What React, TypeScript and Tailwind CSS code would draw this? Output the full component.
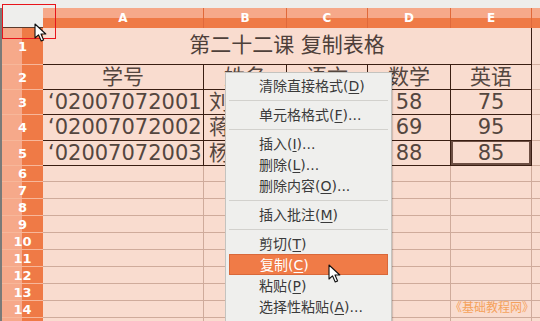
import React from "react";

const FONT = '"DejaVu Sans", "Noto Sans CJK SC", sans-serif';

const COLS = [
  { k: "A", w: "w-[161px]" },
  { k: "B", w: "w-[83px]" },
  { k: "C", w: "w-[81px]" },
  { k: "D", w: "w-[83px]" },
  { k: "E", w: "w-[81px]" },
];

function RowHead({ n, h }: { n?: number; h: string }) {
  return (
    <div
      className={`${h} w-[41px] shrink-0 flex items-center justify-center border-b border-[#f7b79a] bg-[linear-gradient(to_right,#f6a98a_20px,#ef7a46_20px)] text-white font-bold text-[13px] leading-none`}
    >
      {n}
    </div>
  );
}

const dataRows = [
  { h: "h-[25px]", cells: ["学号", "姓名", "语文", "数学", "英语"], center: true },
  { h: "h-[25px]", cells: ["‘02007072001", "刘芳", "80", "58", "75"] },
  { h: "h-[26px]", cells: ["‘02007072002", "蒋敏", "92", "69", "95"] },
  { h: "h-[25px]", cells: ["‘02007072003", "杨洋", "77", "88", "85"] },
];

function Arrow({ className }: { className: string }) {
  return (
    <svg className={className} width="13" height="20" viewBox="0 0 13 20">
      <path
        d="M1 1 L1 15 L4.5 11.8 L7.2 18 L9.6 17 L7 11 L11.8 11 Z"
        fill="#fff"
        stroke="#111"
        strokeWidth="1.1"
        strokeLinejoin="round"
      />
    </svg>
  );
}

type Item = { t: string; m: string; tail?: string; hi?: boolean };
const menu: (Item | "sep")[] = [
  { t: "清除直接格式(", m: "D", tail: ")" },
  "sep",
  { t: "单元格格式(", m: "F", tail: ")..." },
  "sep",
  { t: "插入(", m: "I", tail: ")..." },
  { t: "删除(", m: "L", tail: ")..." },
  { t: "删除内容(", m: "O", tail: ")..." },
  "sep",
  { t: "插入批注(", m: "M", tail: ")" },
  "sep",
  { t: "剪切(", m: "T", tail: ")" },
  { t: "复制(", m: "C", tail: ")", hi: true },
  { t: "粘贴(", m: "P", tail: ")" },
  { t: "选择性粘贴(", m: "A", tail: ")..." },
  "sep",
];

export default function App() {
  return (
    <div
      className="relative w-[540px] h-[321px] overflow-hidden bg-[#eeeeec]"
      style={{ fontFamily: FONT }}
    >
      <div className="h-[8px] bg-[#eeeeec]" />
      <div className="flex">
        <div className="w-[2px] shrink-0 bg-[#7a7a78]" />
        <div className="flex-1 flex flex-col bg-[#f9dccf]">
          {/* column header */}
          <div className="flex h-[20px]">
            <div className="w-[41px] shrink-0 bg-[#eeeeec] border-b border-[#5a3a2c]" />
            {COLS.map((c) => (
              <div
                key={c.k}
                className={`${c.w} shrink-0 flex items-center justify-center border-r border-[#e0693a] bg-[linear-gradient(to_bottom,#f6a98a_50%,#ef7a46_50%)] text-white font-bold text-[12px] leading-none`}
              >
                {c.k}
              </div>
            ))}
            <div className="flex-1 bg-[linear-gradient(to_bottom,#f6a98a_50%,#ef7a46_50%)]" />
          </div>

          {/* row 1 merged title */}
          <div className="flex h-[37px]">
            <RowHead n={1} h="h-[37px]" />
            <div className="w-[489px] shrink-0 flex items-center justify-center border-r border-b border-[#3a1e12] text-[21px] text-[#4e403a]">
              第二十二课 复制表格
            </div>
            <div className="flex-1 border-b border-[#d4b0a0]" />
          </div>

          {dataRows.map((r, ri) => (
            <div key={ri} className={`flex ${r.h}`}>
              <RowHead n={ri + 2} h={r.h} />
              {COLS.map((c, ci) => {
                const sel = ri === 3 && ci === 4;
                const left = ci < 2 && !r.center;
                return (
                  <div
                    key={c.k}
                    className={`${c.w} shrink-0 relative flex items-center ${
                      left ? "justify-start pl-[5px]" : "justify-center"
                    } border-r border-b border-[#3a1e12] text-[21px] leading-none text-[#54463f] whitespace-nowrap overflow-hidden`}
                  >
                    {r.cells[ci]}
                    {sel && (
                      <div className="absolute -left-px -top-[2px] -right-px -bottom-px border-[3px] border-[#6d4f43]" />
                    )}
                  </div>
                );
              })}
              <div className="flex-1 border-b border-[#d4b0a0]" />
            </div>
          ))}

          {[6, 7, 8, 9, 10, 11, 12, 13, 14, 15].map((n) => {
            const h = n === 6 ? "h-[16px]" : "h-[17px]";
            return (
              <div key={n} className={`flex ${h}`}>
                <RowHead n={n < 15 ? n : undefined} h={h} />
                {COLS.map((c) => (
                  <div
                    key={c.k}
                    className={`${c.w} shrink-0 border-r border-b border-[#cfab9b]`}
                  />
                ))}
                <div className="flex-1 border-b border-[#cfab9b]" />
              </div>
            );
          })}
        </div>
      </div>

      {/* selection rectangle at corner */}
      <div className="absolute left-[2px] top-[4px] w-[54px] h-[35px] border border-[#e8141a]" />
      <Arrow className="absolute left-[34px] top-[23px]" />

      {/* context menu */}
      <div className="absolute left-[225px] top-[72px] w-[167px] h-[260px] bg-[#efefed] border border-[#c4c3bf] shadow-[1px_1px_1px_rgba(0,0,0,0.15)] px-[3px] pt-[2px] text-[14px] leading-none text-[#3a3a3a]">
        {menu.map((it, i) =>
          it === "sep" ? (
            <div key={i} className="h-[8px] flex items-center">
              <div className="w-full border-t border-[#d2d1cd]" />
            </div>
          ) : (
            <div
              key={i}
              className={`h-[21px] flex items-center pl-[30px] whitespace-nowrap ${
                it.hi ? "bg-[#f07b47] border border-[#d9683a] text-white" : ""
              }`}
            >
              {it.t}
              <span className="underline underline-offset-2">{it.m}</span>
              {it.tail}
            </div>
          )
        )}
      </div>
      <Arrow className="absolute left-[328px] top-[264px]" />

      {/* watermark */}
      <div className="absolute left-[450px] top-[302px] text-[12px] leading-none text-[#f5a25c] whitespace-nowrap">
        《基础教程网》
      </div>
    </div>
  );
}
